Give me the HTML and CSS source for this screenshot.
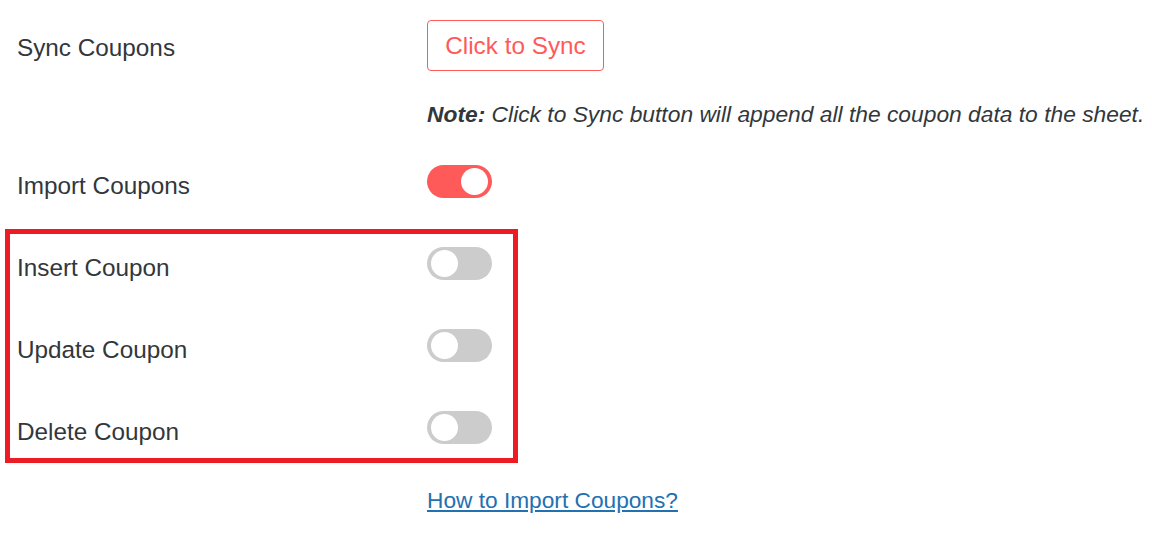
FILE: index.html
```html
<!DOCTYPE html>
<html>
<head>
<meta charset="utf-8">
<link rel="stylesheet" href="styles.css">
</head>
<body>
<div class="page">
  <div class="row row-sync">
    <div class="label">Sync Coupons</div>
    <div class="field"><button class="sync-btn">Click to Sync</button></div>
  </div>
  <div class="note"><strong>Note:</strong> Click to Sync button will append all the coupon data to the sheet.</div>
  <div class="row row-import">
    <div class="label">Import Coupons</div>
    <div class="field"><span class="toggle on"><span class="knob"></span></span></div>
  </div>
  <div class="highlight">
    <div class="row">
      <div class="label">Insert Coupon</div>
      <div class="field"><span class="toggle"><span class="knob"></span></span></div>
    </div>
    <div class="row">
      <div class="label">Update Coupon</div>
      <div class="field"><span class="toggle"><span class="knob"></span></span></div>
    </div>
    <div class="row">
      <div class="label">Delete Coupon</div>
      <div class="field"><span class="toggle"><span class="knob"></span></span></div>
    </div>
  </div>
  <div class="link-row"><a href="#" class="help-link">How to Import Coupons?</a></div>
</div>
</body>
</html>
```
FILE: styles.css
```css
html, body {
  margin: 0;
  padding: 0;
  background: #ffffff;
}
body {
  font-family: "Liberation Sans", Arial, sans-serif;
  font-size: 24px;
  color: #32373c;
}
.page {
  padding: 20px 0 0 5px;
}
.row {
  display: flex;
  align-items: center;
  padding-left: 12px;
}
.label {
  width: 410px;
  flex: none;
  padding-top: 9px;
  line-height: 28px;
  font-size: 24.3px;
}
.row-sync .label {
  padding-top: 4px;
}
.field {
  display: flex;
  align-items: center;
}
.row-sync {
  height: 51px;
}
.sync-btn {
  box-sizing: border-box;
  height: 51px;
  width: 177px;
  padding: 0;
  margin: 0;
  background: #fff;
  border: 1px solid #ff5a5a;
  border-radius: 4px;
  color: #ff5a5a;
  font-family: "Liberation Sans", Arial, sans-serif;
  font-size: 24.3px;
}
.note {
  margin: 29px 0 0 422px;
  line-height: 28px;
  font-size: 22.8px;
  font-style: italic;
  white-space: nowrap;
}
.note strong {
  font-weight: bold;
}
.row-import {
  margin-top: 37px;
  height: 33px;
}
.toggle {
  position: relative;
  display: block;
  width: 65px;
  height: 33px;
  border-radius: 17px;
  background: #cccccc;
}
.toggle.on {
  background: #ff5a5a;
}
.knob {
  position: absolute;
  top: 3px;
  left: 4px;
  width: 27px;
  height: 27px;
  border-radius: 50%;
  background: #ffffff;
}
.toggle.on .knob {
  left: auto;
  right: 4px;
}
.highlight {
  margin-top: 31px;
  width: 496px;
  border: 5px solid #ed1c24;
  padding: 13px 0 14px 7px;
  display: flex;
  flex-direction: column;
  gap: 49px;
}
.highlight .row {
  height: 33px;
  padding-left: 0;
}
.link-row {
  margin: 23px 0 0 422px;
  line-height: 28px;
  font-size: 22.7px;
}
.help-link {
  color: #2271b1;
  text-decoration: underline;
}
```
